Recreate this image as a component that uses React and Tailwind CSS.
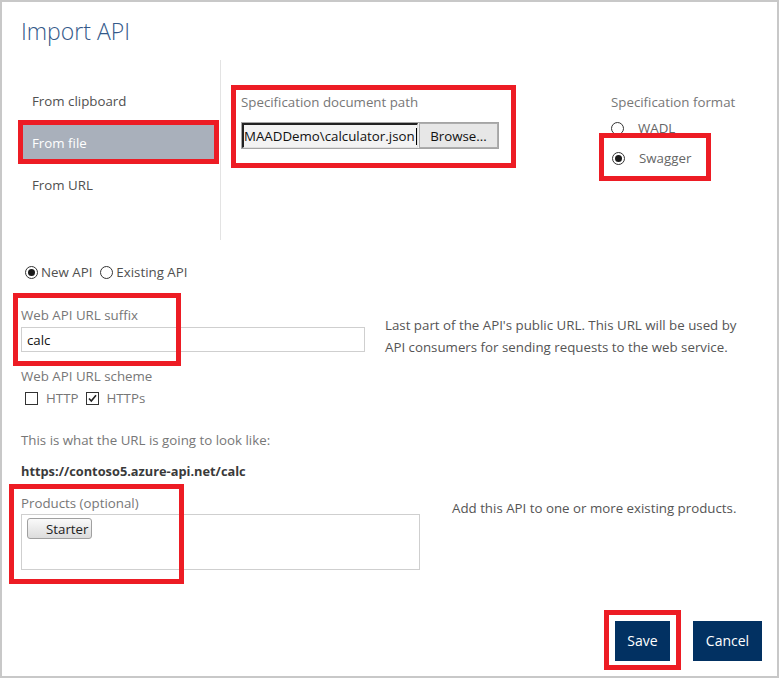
import React from "react";

function Radio({ checked }) {
  return (
    <span className="inline-flex h-[13px] w-[13px] items-center justify-center rounded-full border border-[#333] bg-white">
      {checked && <span className="h-[7px] w-[7px] rounded-full bg-[#1a1a1a]" />}
    </span>
  );
}

function Check({ checked }) {
  return (
    <span className="relative inline-flex h-[13px] w-[13px] items-center justify-center border border-[#333] bg-white">
      {checked && (
        <svg width="11" height="11" viewBox="0 0 11 11" className="absolute left-[0px] top-[0px]">
          <path d="M2 5.5 L4.3 8 L9 2.2" fill="none" stroke="#222" strokeWidth="1.6" />
        </svg>
      )}
    </span>
  );
}

function RedBox({ className }) {
  return <div className={"pointer-events-none absolute border-[5px] border-[#ed1c24] " + className} />;
}

export default function App() {
  return (
    <div className="relative h-[678px] w-[779px] border-2 border-[#c8c8c8] bg-white font-['Open_Sans','Noto_Sans',sans-serif] text-[13.3px] leading-[20px] text-[#505050]">
      <h1 className="pl-[19px] pt-[13px] text-[23px] font-light leading-[32px] text-[#34598a]">Import API</h1>

      <div className="mt-[13px] flex h-[180px]">
        <nav className="w-[219px] border-r border-[#e3e3e3] pl-[19px] pr-[3px] pt-[23px]">
          <div className="mb-[7px] flex h-[35px] items-center pl-[11px] text-[#505050]">From clipboard</div>
          <div className="mb-[7px] flex h-[35px] items-center bg-[#a9b0bb] pl-[11px] text-white">From file</div>
          <div className="flex h-[35px] items-center pl-[11px] text-[#505050]">From URL</div>
        </nav>

        <div className="w-[388px] pl-[20px] pt-[32px]">
          <div className="text-[#777]">Specification document path</div>
          <div className="mt-[10px] flex h-[27px] w-[258px] border border-[#a5a5a5] bg-[#f0f0f0]">
            <div className="flex w-[176px] items-center overflow-hidden border-l-2 border-t-2 border-[#222] border-b border-r border-b-[#e0e0e0] border-r-[#e0e0e0] bg-[#f3f3f3] text-[#111]">
              <span className="whitespace-nowrap">MAADDemo\calculator.json</span>
              <span className="ml-[1px] h-[17px] w-[1px] bg-black" />
            </div>
            <div className="ml-[1px] flex flex-1 items-center justify-center border border-[#adadad] bg-[#e7e7e7] text-[#111]">Browse...</div>
          </div>
        </div>

        <div className="flex-1 pl-[2px] pt-[32px]">
          <div className="text-[#777]">Specification format</div>
          <div className="mt-[1px] flex h-[30px] items-center gap-[14px] text-[#666]">
            <Radio />
            <span>WADL</span>
          </div>
          <div className="flex h-[30px] items-center gap-[14px] pl-[1px] text-[#666]">
            <Radio checked />
            <span>Swagger</span>
          </div>
        </div>
      </div>

      <div className="pl-[19px]">
        <div className="mt-[22px] flex items-center pl-[4px]">
          <Radio checked />
          <span className="ml-[3px]">New API</span>
          <span className="ml-[8px] inline-flex"><Radio /></span>
          <span className="ml-[3px]">Existing API</span>
        </div>

        <div className="mt-[23px] flex items-start">
          <div className="w-[344px]">
            <div className="text-[#777]">Web API URL suffix</div>
            <div className="mt-[2px] flex h-[25px] items-center border border-[#cfcfcf] pl-[5px] text-[#111]">calc</div>
          </div>
          <div className="ml-[20px] mt-[9px] h-[38px] leading-[22px] text-[#555]">
            Last part of the API's public URL. This URL will be used by
            <br />
            API consumers for sending requests to the web service.
          </div>
        </div>

        <div className="mt-[14px] text-[#777]">Web API URL scheme</div>
        <div className="mt-[2px] flex items-center pl-[4px] text-[#777]">
          <Check />
          <span className="ml-[8px]">HTTP</span>
          <span className="ml-[8px] inline-flex"><Check checked /></span>
          <span className="ml-[7px]">HTTPs</span>
        </div>

        <div className="mt-[22px] text-[#777]">This is what the URL is going to look like:</div>
        <div className="mt-[11px] text-[12.8px] font-bold text-[#3a3a3a]">https://contoso5.azure-api.net/calc</div>

        <div className="mt-[12px] flex">
          <div className="w-[399px]">
            <div className="text-[#777]">Products (optional)</div>
            <div className="mt-[1px] h-[56px] border border-[#cfcfcf] pl-[5px] pt-[3px]">
              <div className="flex h-[21px] w-[65px] items-center rounded-[3px] border border-[#a0a0a0] bg-gradient-to-b from-[#fafafa] to-[#dcdcdc] pl-[18px] text-[#222]">
                Starter
              </div>
            </div>
          </div>
          <div className="ml-[32px] mt-[5px] text-[#555]">Add this API to one or more existing products.</div>
        </div>
      </div>

      <div className="mt-[51px] flex justify-end gap-[23px] pr-[15px]">
        <button className="h-[40px] w-[55px] bg-[#023162] text-[14px] text-white">Save</button>
        <button className="h-[40px] w-[69px] bg-[#023162] text-[14px] text-white">Cancel</button>
      </div>

      <RedBox className="left-[16px] top-[118px] h-[44px] w-[201px]" />
      <RedBox className="left-[229px] top-[83px] h-[83px] w-[285px]" />
      <RedBox className="left-[597px] top-[131px] h-[48px] w-[112px]" />
      <RedBox className="left-[11px] top-[291px] h-[73px] w-[168px]" />
      <RedBox className="left-[7px] top-[482px] h-[100px] w-[175px]" />
      <RedBox className="left-[602px] top-[608px] h-[60px] w-[77px]" />
    </div>
  );
}
